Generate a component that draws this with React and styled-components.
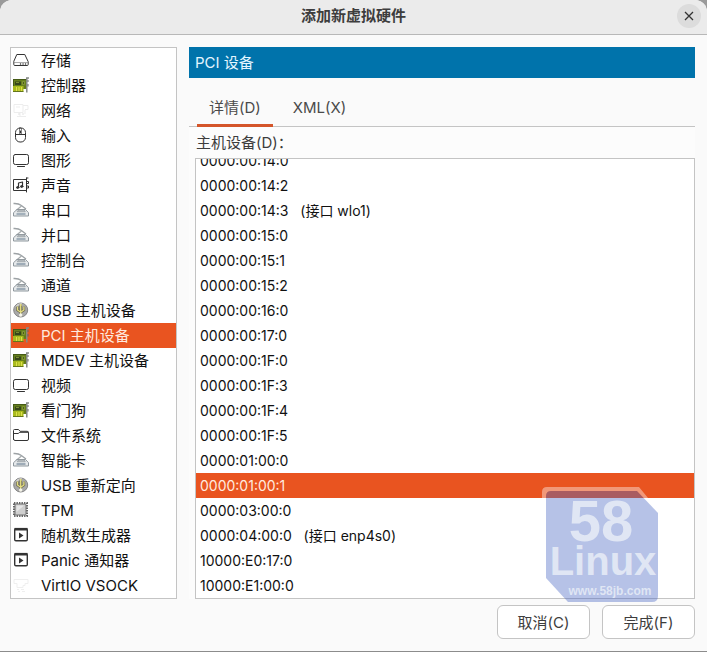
import React, { useState } from 'react';
import styled, { createGlobalStyle } from 'styled-components';

const GlobalStyle = createGlobalStyle`
  * {
    box-sizing: border-box;
  }

  body {
    margin: 0;
    background-color: #9a9a9a;
    font-family: Inter, "Noto Sans CJK SC", sans-serif;
    font-size: 15px;
    line-height: 25px;
    color: #111;
  }

  button {
    font: inherit;
    color: inherit;
  }
`;

const Dialog = styled.main`
  min-height: 100vh;
  display: flex;
  flex-direction: column;
  overflow: hidden;
  background-color: #fafafa;
  border-bottom: 1px solid #8c8c8c;
  border-radius: 12px 12px 0 0;
`;

const TitleBar = styled.header`
  height: 35px;
  padding: 0 6px;
  display: grid;
  grid-template-columns: 1fr auto 1fr;
  align-items: center;
  background-color: #ebebeb;
  border-bottom: 1px solid #b8b8b8;
`;

const Title = styled.h1`
  grid-column: 2;
  margin: 0;
  padding-bottom: 4px;
  font-size: 15px;
  font-weight: 700;
  color: #3d3d3d;
`;

const CloseButton = styled.button`
  justify-self: end;
  width: 24px;
  height: 24px;
  padding: 0;
  margin-bottom: 2px;
  display: flex;
  align-items: center;
  justify-content: center;
  border: none;
  border-radius: 50%;
  background-color: #dcdcdc;
`;

const Body = styled.div`
  flex: 1;
  padding: 12px 12px 6px 10px;
  display: flex;
  gap: 12px;
`;

const Sidebar = styled.nav`
  flex: 0 0 167px;
  border: 1px solid #c4c4c4;
  background-color: #fff;
`;

const HardwareItem = styled.button`
  width: 100%;
  height: 25px;
  padding: 0 2px;
  display: flex;
  align-items: center;
  gap: 12px;
  border: none;
  text-align: left;
  white-space: nowrap;
  background-color: ${({ $selected }) => ($selected ? '#e95420' : 'transparent')};
  color: ${({ $selected }) => ($selected ? '#ffeadf' : '#111')};
`;

const Icon = styled.svg`
  width: 16px;
  height: 16px;
  margin-bottom: 2px;
  flex: none;
`;

const Panel = styled.section`
  flex: 1;
  min-width: 0;
  display: flex;
  flex-direction: column;
`;

const Banner = styled.h2`
  height: 31px;
  margin: 0;
  padding: 0 6px;
  font-size: 15px;
  font-weight: 400;
  line-height: 31px;
  background-color: #0073ab;
  color: #e4f6ff;
`;

const Tabs = styled.div`
  height: 49px;
  padding: 0 8px;
  display: flex;
  align-items: flex-end;
  gap: 8px;
  border-bottom: 1px solid #c4c4c4;
`;

const Tab = styled.button`
  height: 36px;
  padding: 0 12px;
  margin-bottom: -1px;
  border: none;
  border-bottom: 3px solid ${({ $active }) => ($active ? '#d4552a' : 'transparent')};
  background: none;
  color: #4a4a4a;
`;

const Page = styled.div`
  flex: 1;
  min-height: 0;
  padding-left: 6px;
  display: flex;
  flex-direction: column;
  background-color: #fcfcfc;
`;

const ListLabel = styled.div`
  height: 31px;
  padding: 0 1px;
  line-height: 32px;
  color: #3d3d3d;
`;

const DeviceList = styled.div`
  flex: 1 1 0;
  min-height: 0;
  overflow: hidden;
  display: flex;
  flex-direction: column;
  justify-content: flex-end;
  border: 1px solid #c4c4c4;
  background-color: #fff;
  font-size: 14px;
`;

const DeviceRow = styled.button`
  flex: none;
  height: 25px;
  padding: 0 4px;
  border: none;
  text-align: left;
  white-space: pre;
  background-color: ${({ $selected }) => ($selected ? '#e95420' : 'transparent')};
  color: ${({ $selected }) => ($selected ? '#ffeadf' : '#111')};
`;

const Actions = styled.footer`
  padding: 0 12px 12px;
  display: flex;
  justify-content: flex-end;
  gap: 12px;
`;

const ActionButton = styled.button`
  min-width: 93px;
  height: 34px;
  padding: 0 12px;
  border: 1px solid #c4c4c4;
  border-radius: 6px;
  background-color: #fff;
  color: #3d3d3d;
`;

const Watermark = styled.svg`
  position: absolute;
  right: 48px;
  top: 486px;
  width: 118px;
  height: 118px;
  opacity: 0.4;
  pointer-events: none;
`;

const line = { fill: 'none', stroke: '#333', strokeLinecap: 'round', strokeLinejoin: 'round' };

const icons = {
  disk: (
    <g {...line}>
      <path d="M4.2 2.5h7.6l3.4 7.2v2.8q0 1-1 1H1.8q-1 0-1-1V9.7z" />
      <path d="M1 10.5h14" strokeWidth=".7" stroke="#888" />
      <path d="M7.5 12h.1M10 12h.1M12.5 12h.1" strokeWidth="1.4" />
    </g>
  ),
  card: (
    <g>
      <path d="M0 2.5h13.5v9.5H0z" fill="#66801c" />
      <path d="M0 2.5h13.5M.5 3v9" stroke="#455a16" />
      <path d="M2 4.5h6v3.5H2z" fill="#36451a" />
      <path d="M3 5.5h3M9.5 4.5h2v3h-2z" stroke="#8c9f3a" fill="#4b5e1c" strokeWidth=".8" />
      <path d="M0 9h10.5v5.5H0z" fill="#a9ba1d" />
      <path d="M3.5 10v4.5M6 10v4.5M8.5 10v4.5" stroke="#dde04c" />
      <path d="M0 14.5h10.5M11 10h2" stroke="#63751b" />
      <path d="M13 1h3M13.8 1v14.5" stroke="#858985" strokeWidth="1.5" />
      <path d="M15 3v2M15 7v2.5" stroke="#666" />
    </g>
  ),
  network: (
    <g fill="none" stroke="#ededed">
      <path d="M1 2.5h9v8H1zM10 3.5h5v4h-3M3 5h4M7 11v3M4 14.5h9M12 8v4" />
      <path d="M5 12h2M9 12h2" stroke="#e2e2e2" />
    </g>
  ),
  vsock: (
    <g fill="none" stroke="#efefef">
      <path d="M1 2.5h14v4h-3v2h-2v2H4v-4H1z" />
      <path d="M4 12.5h2M8 12.5h3M5 14.5h2M9 14.5h3" />
    </g>
  ),
  mouse: (
    <g {...line}>
      <rect x="2.5" y="1" width="10" height="14" rx="4.5" />
      <path d="M2.5 7.5h10M7.5 4v2" />
      <path d="M6.5 1.5v5.8M8.5 1.5v5.8" strokeWidth=".6" />
    </g>
  ),
  display: (
    <g {...line}>
      <rect x=".5" y="2.5" width="15" height="10" rx="1.8" />
      <path d="M4.5 14.5h7" />
    </g>
  ),
  sound: (
    <g {...line}>
      <path d="M13 2.5H.5v11H13M13.5 1v14M13.5 1h1.5" />
      <path d="M14 4.5h1.5v2H14M14 9h1.5v2H14" />
      <path d="M5.5 10.5V6l4-1v4.5" strokeWidth="1.2" />
      <ellipse cx="4.7" cy="10.5" rx="1.2" ry=".9" fill="#333" />
      <ellipse cx="8.7" cy="9.5" rx="1.2" ry=".9" fill="#333" />
    </g>
  ),
  port: (
    <g fill="none" strokeLinejoin="round">
      <path d="M.5 1.5q5-.3 7.5 1.8l5 3.7" stroke="#9da2a5" strokeWidth="1.4" />
      <path d="M8.5 4L3 8.5" stroke="#a6abad" strokeWidth="1.2" />
      <path d="M4 7.5h8.5l3 3.2V14H.5v-3.3z" fill="#e6e9eb" stroke="#8e979d" />
      <path d="M5.5 7.8H11l1.3 2H4.2z" fill="#b9bec2" stroke="#8b9297" strokeWidth=".6" />
      <path d="M3.5 12h9" stroke="#8d9cab" strokeWidth="1.6" />
    </g>
  ),
  usb: (
    <g>
      <circle cx="7.7" cy="8" r="7" fill="#a9a9a9" stroke="#858585" />
      <path d="M3 5q2-3.5 6-3" stroke="#d2d2d2" fill="none" strokeWidth="1.5" />
      <path d="M7.7 2.5v10M4.5 4.5V8l3.2 2.2L10.9 8V4.5" fill="none" stroke="#6b6950" strokeWidth="2.6" />
      <path d="M7.7 2.5v10M4.5 4.5V8l3.2 2.2L10.9 8V4.5" fill="none" stroke="#e6df83" strokeWidth="1.3" />
      <circle cx="7.7" cy="13" r="1.7" fill="#f5f4e9" />
      <path d="M6.2 3.5l1.5-2 1.5 2z" fill="#e6df83" />
    </g>
  ),
  folder: (
    <g {...line}>
      <path d="M.5 12V3.5q0-1 1-1h4l1.6 1.8h7q1.4 0 1.4 1.4V12q0 1.5-1.5 1.5H2Q.5 13.5.5 12z" />
      <path d="M.5 6.5h4.7l1.6-1.2h8.5" />
    </g>
  ),
  chip: (
    <g>
      <rect x="1" y="1" width="13" height="13" fill="none" stroke="#666" strokeWidth="2" strokeDasharray="1.4 1.1" />
      <rect x="2" y="2" width="11" height="11" rx="1" fill="#cfcfcf" stroke="#6e6e6e" />
      <path d="M3.5 10V3.5H11z" fill="#e6e6e6" />
    </g>
  ),
  run: (
    <g>
      <rect x="1.7" y="1.7" width="12.6" height="12" rx="1.2" fill="none" stroke="#333" strokeWidth="1.4" />
      <path d="M1.5 2.2h13" stroke="#333" strokeWidth="2.6" />
      <path d="M6 5.5v6l4.5-3z" fill="#333" />
    </g>
  ),
};

const hardware = [
  ['存储', 'disk'],
  ['控制器', 'card'],
  ['网络', 'network'],
  ['输入', 'mouse'],
  ['图形', 'display'],
  ['声音', 'sound'],
  ['串口', 'port'],
  ['并口', 'port'],
  ['控制台', 'port'],
  ['通道', 'port'],
  ['USB 主机设备', 'usb'],
  ['PCI 主机设备', 'card'],
  ['MDEV 主机设备', 'card'],
  ['视频', 'display'],
  ['看门狗', 'card'],
  ['文件系统', 'folder'],
  ['智能卡', 'port'],
  ['USB 重新定向', 'usb'],
  ['TPM', 'chip'],
  ['随机数生成器', 'run'],
  ['Panic 通知器', 'run'],
  ['VirtIO VSOCK', 'vsock'],
];

const devices = [
  '0000:00:14:0',
  '0000:00:14:2',
  '0000:00:14:3   (接口 wlo1)',
  '0000:00:15:0',
  '0000:00:15:1',
  '0000:00:15:2',
  '0000:00:16:0',
  '0000:00:17:0',
  '0000:00:1F:0',
  '0000:00:1F:3',
  '0000:00:1F:4',
  '0000:00:1F:5',
  '0000:01:00:0',
  '0000:01:00:1',
  '0000:03:00:0',
  '0000:04:00:0   (接口 enp4s0)',
  '10000:E0:17:0',
  '10000:E1:00:0',
];

const tabs = ['详情(D)', 'XML(X)'];

export default () => {
  const [selected, setSelected] = useState('PCI 主机设备');
  const [tab, setTab] = useState(tabs[0]);
  const [device, setDevice] = useState('0000:01:00:1');

  return (
    <Dialog>
      <GlobalStyle />
      <TitleBar>
        <Title>添加新虚拟硬件</Title>
        <CloseButton aria-label="关闭">
          <svg width="10" height="10" viewBox="0 0 10 10">
            <path d="M1 1l8 8M9 1L1 9" stroke="#333" strokeWidth="1.3" />
          </svg>
        </CloseButton>
      </TitleBar>
      <Body>
        <Sidebar>
          {hardware.map(([name, icon]) => (
            <HardwareItem
              key={name}
              $selected={name === selected}
              onClick={() => setSelected(name)}
            >
              <Icon viewBox="0 0 16 16" aria-hidden="true">{icons[icon]}</Icon>
              {name}
            </HardwareItem>
          ))}
        </Sidebar>
        <Panel>
          <Banner>PCI 设备</Banner>
          <Tabs role="tablist">
            {tabs.map(name => (
              <Tab
                key={name}
                role="tab"
                aria-selected={name === tab}
                $active={name === tab}
                onClick={() => setTab(name)}
              >
                {name}
              </Tab>
            ))}
          </Tabs>
          <Page>
            <ListLabel id="host-device">主机设备(D)：</ListLabel>
            <DeviceList role="listbox" aria-labelledby="host-device">
              {devices.map(name => (
                <DeviceRow
                  key={name}
                  role="option"
                  aria-selected={name === device}
                  $selected={name === device}
                  onClick={() => setDevice(name)}
                >
                  {name}
                </DeviceRow>
              ))}
            </DeviceList>
          </Page>
        </Panel>
      </Body>
      <Actions>
        <ActionButton>取消(C)</ActionButton>
        <ActionButton>完成(F)</ActionButton>
      </Actions>
      <Watermark viewBox="0 0 118 118" aria-hidden="true">
        <path d="M6 1h92l9 11H8v18l-7-8V6q0-5 5-5z" fill="#fff" />
        <path d="M10 5h86l21 22v83q0 6-6 6H27L5 92V10q0-5 5-5z" fill="#4a68c4" />
        <g fill="#b2c2e4" fontFamily="Liberation Sans, sans-serif" fontWeight="700" textAnchor="middle">
          <text x="60" y="55" fontSize="58">58</text>
          <text x="62" y="89" fontSize="40">Linux</text>
          <text x="69" y="109" fontSize="12">www.58jb.com</text>
        </g>
      </Watermark>
    </Dialog>
  );
};
